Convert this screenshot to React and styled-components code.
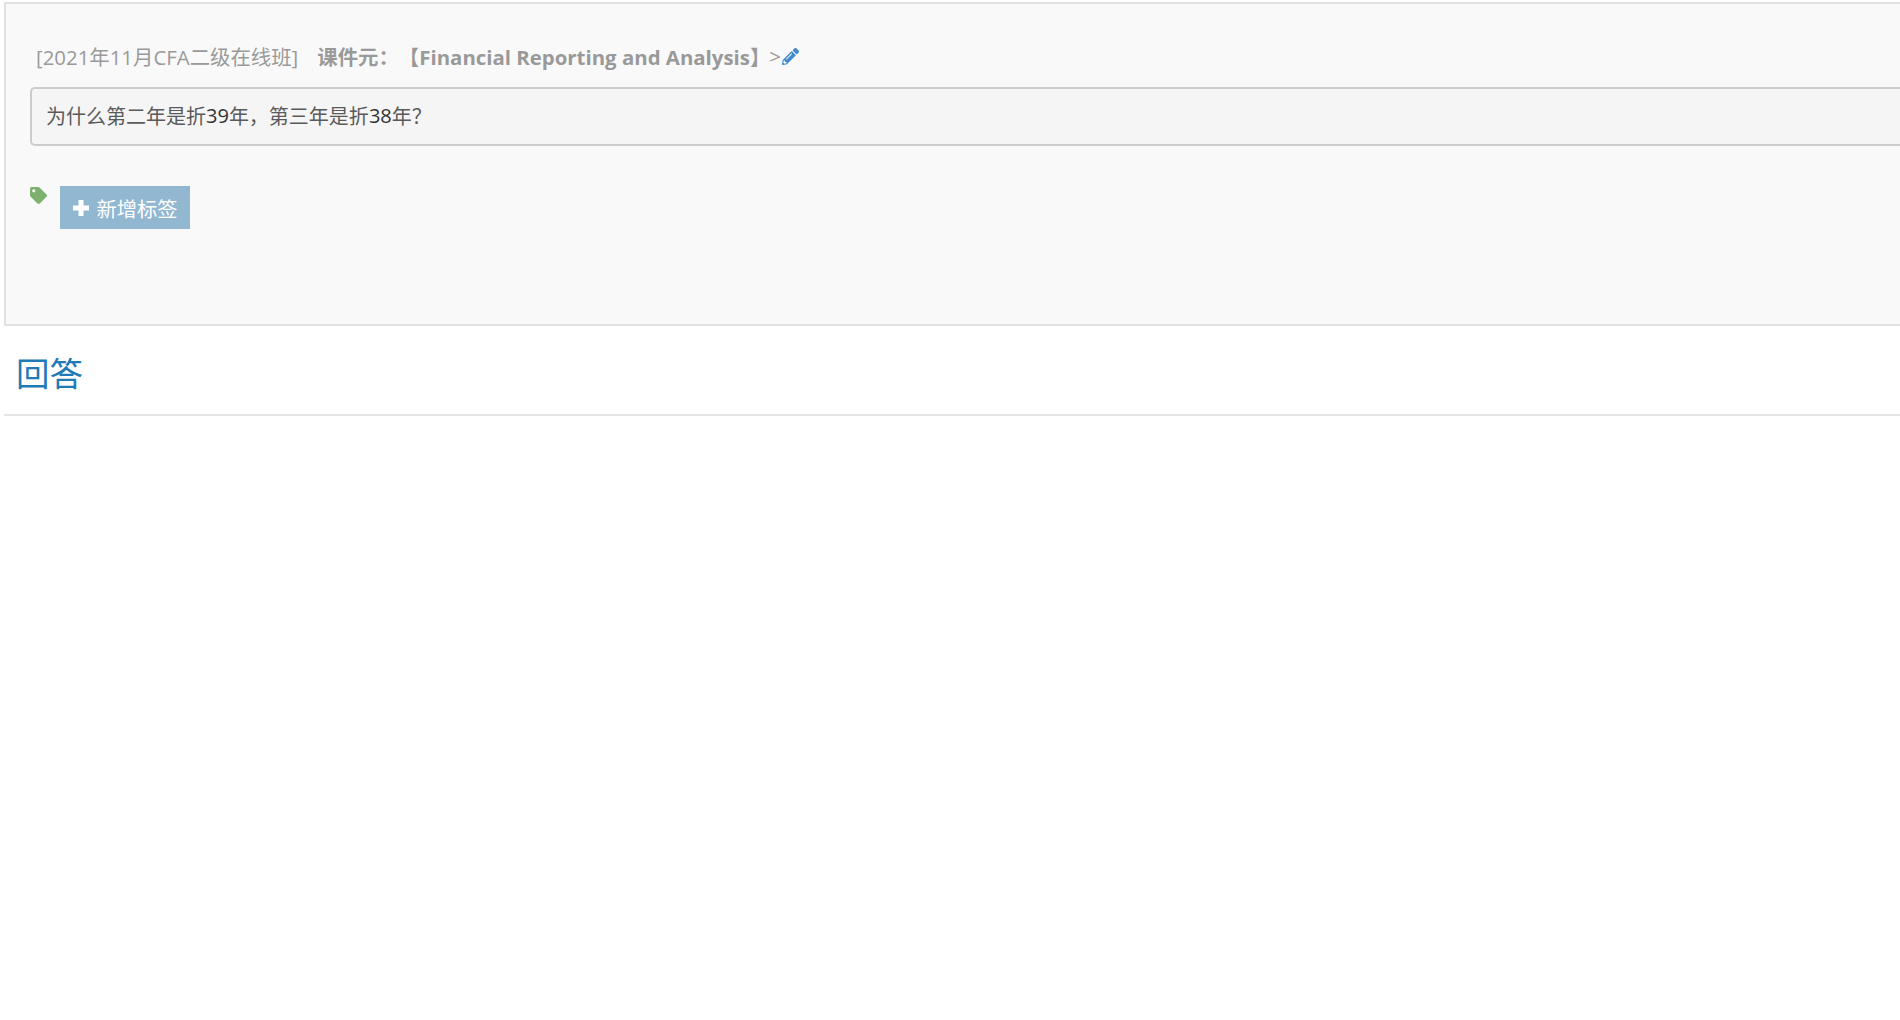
import React from "react";
import styled, { createGlobalStyle } from "styled-components";
import { FaPencilAlt, FaTag } from "react-icons/fa";

const GlobalStyle = createGlobalStyle`
    html, body {
        margin: 0;
        padding: 0;
        background: #fff;
        overflow: hidden;
    }
    body {
        font-family: "Open Sans", "Noto Sans CJK SC", sans-serif;
        text-spacing-trim: space-all;
    }
`;

const Page = styled.div`
    padding: 2px 0 0 4px;
`;

const QuestionPanel = styled.section`
    height: 324px;
    box-sizing: border-box;
    padding: 37px 0 0 24px;
    background: #f9f9f9;
    border: solid #e0e0e0;
    border-width: 2px 0 2px 2px;
`;

const TitleRow = styled.div`
    display: flex;
    align-items: center;
    height: 30px;
    padding-left: 6px;
    font-size: 20.4px;
    color: #999;
    white-space: nowrap;
`;

const ClassName = styled.span`
    margin-right: 19px;
`;

const CourseName = styled.strong`
    font-weight: 700;
    margin-right: -1px;
`;

const EditIcon = styled(FaPencilAlt)`
    width: 17px;
    height: 17px;
    margin-left: 1px;
    color: #428bca;
`;

const QuestionBox = styled.div`
    height: 59px;
    box-sizing: border-box;
    margin-top: 16px;
    padding: 0 14px 2px;
    display: flex;
    align-items: center;
    background: #f5f5f5;
    border: 2px solid #ccc;
    border-right: 0;
    border-radius: 5px 0 0 5px;
    font-size: 20px;
    color: #5a5a5a;
    white-space: pre;
`;

const Num = styled.span`
    color: #333;
`;

const TagRow = styled.div`
    display: flex;
    align-items: flex-start;
    margin-top: 40px;
`;

const TagIcon = styled(FaTag)`
    width: 17px;
    height: 17px;
    margin-top: 1px;
    color: #7cb26e;
`;

const AddTagButton = styled.button`
    display: flex;
    align-items: center;
    justify-content: center;
    gap: 7px;
    width: 130px;
    height: 43px;
    margin-left: 13px;
    padding: 0 0 0 1px;
    border: 0;
    background: #91b7d1;
    color: #fff;
    font-family: inherit;
    font-size: 20.3px;
`;

const PlusIcon = () => (
    <svg width="16" height="16" viewBox="0 0 16 16" fill="currentColor">
        <path d="M5.5 0h5v5.5H16v5h-5.5V16h-5v-5.5H0v-5h5.5z" />
    </svg>
);

const AnswerHeader = styled.h2`
    margin: 0;
    height: 90px;
    box-sizing: border-box;
    padding: 24px 0 0 12px;
    border-bottom: 2px solid #e5e5e5;
    font-size: 33.5px;
    line-height: 46px;
    font-weight: 400;
    color: #1f7ab8;
`;

export default function App() {
    return (
        <>
            <GlobalStyle />
            <Page>
                <QuestionPanel>
                    <TitleRow>
                        <ClassName>[2021年11月CFA二级在线班]</ClassName>
                        <CourseName>课件元：【Financial Reporting and Analysis】</CourseName>
                        <span>&gt;</span>
                        <EditIcon />
                    </TitleRow>
                    <QuestionBox>
                        为什么第二年是折<Num>39</Num>年，第三年是折<Num>38</Num>年？
                    </QuestionBox>
                    <TagRow>
                        <TagIcon />
                        <AddTagButton>
                            <PlusIcon />
                            新增标签
                        </AddTagButton>
                    </TagRow>
                </QuestionPanel>
                <AnswerHeader>回答</AnswerHeader>
            </Page>
        </>
    );
}
